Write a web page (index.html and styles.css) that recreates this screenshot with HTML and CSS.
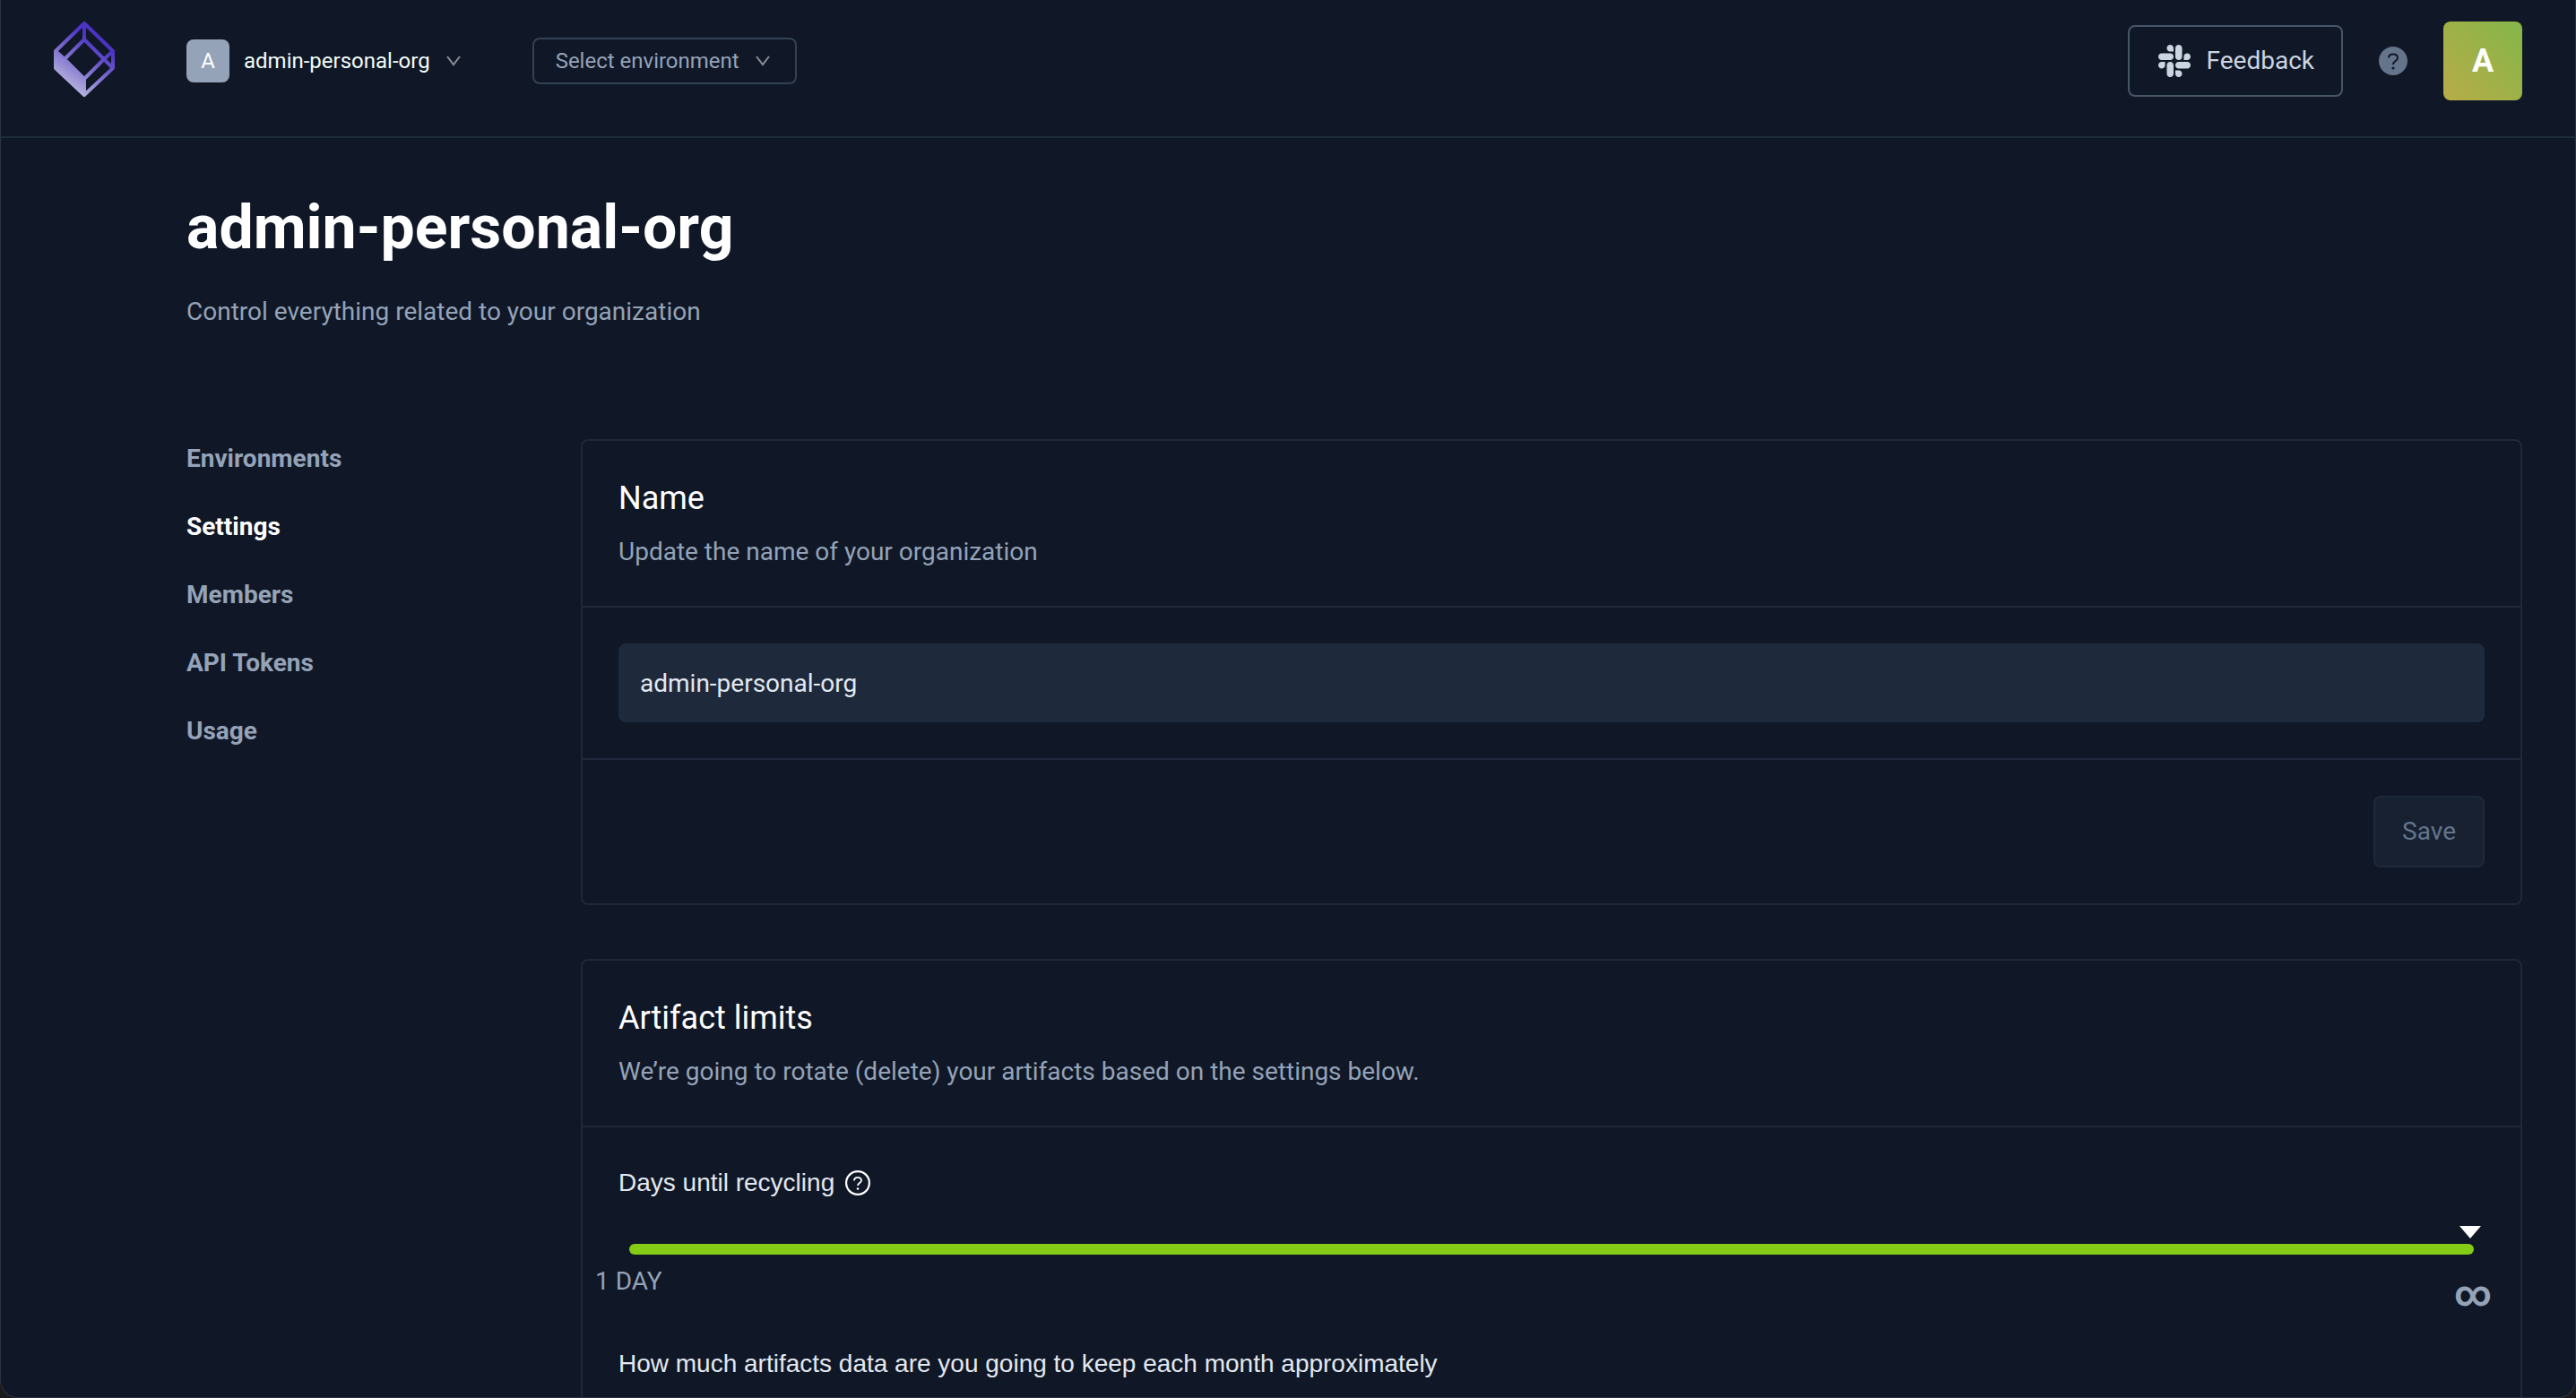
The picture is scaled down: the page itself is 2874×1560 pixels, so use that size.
FILE: index.html
```html
<!DOCTYPE html>
<html lang="en">
<head>
<meta charset="utf-8">
<meta name="viewport" content="width=device-width, initial-scale=1">
<title>admin-personal-org – Settings</title>
<link rel="stylesheet" href="styles.css">
</head>
<body>
<div class="window">
  <header class="topbar">
    <a class="logo" href="#" aria-label="Home">
      <svg width="68" height="88" viewBox="0 0 68 88" fill="none" aria-hidden="true">
        <defs>
          <linearGradient id="cube" x1="50" y1="24" x2="14" y2="76" gradientUnits="userSpaceOnUse">
            <stop offset="0" stop-color="#4c33c6"/>
            <stop offset=".45" stop-color="#7a6bcd"/>
            <stop offset="1" stop-color="#bdbbe0"/>
          </linearGradient>
        </defs>
        <path d="M2 33 12 42 34 64V82L2 52Z" fill="url(#cube)"/>
        <path d="M34 2 66 33V52L34 82 2 52V33ZM34 2V20M34 20 56 42 34 64 12 42ZM2 33 12 42M56 42 66 33M56 42 66 52M34 64V82" stroke="url(#cube)" stroke-width="4" stroke-linejoin="round"/>
      </svg>
    </a>
    <div class="org-picker">
      <span class="org-badge">A</span>
      <select class="picker" aria-label="Organization"><option>admin-personal-org</option></select>
      <svg class="chevron" width="16" height="12" viewBox="0 0 16 12" aria-hidden="true"><path d="M1 1 8 10 15 1"/></svg>
    </div>
    <div class="env-picker">
      <select class="picker" aria-label="Environment"><option>Select environment</option></select>
      <svg class="chevron" width="16" height="12" viewBox="0 0 16 12" aria-hidden="true"><path d="M1 1 8 10 15 1"/></svg>
    </div>
    <div class="topbar-actions">
      <button class="feedback" type="button">
        <svg width="36" height="36" viewBox="0 32 448 448" fill="currentColor" aria-hidden="true"><path d="M94.12 315.1c0 25.9-21.16 47.06-47.06 47.06S0 341 0 315.1c0-25.9 21.16-47.06 47.06-47.06h47.06v47.06zm23.72 0c0-25.9 21.16-47.06 47.06-47.06s47.06 21.16 47.06 47.06v117.84c0 25.9-21.16 47.06-47.06 47.06s-47.06-21.16-47.06-47.06V315.1zm47.06-188.98c-25.9 0-47.06-21.16-47.06-47.06S139 32 164.9 32s47.06 21.16 47.06 47.06v47.06H164.9zm0 23.72c25.9 0 47.06 21.16 47.06 47.06s-21.16 47.06-47.06 47.06H47.06C21.16 243.96 0 222.8 0 196.9s21.16-47.06 47.06-47.06H164.9zm188.98 47.06c0-25.9 21.16-47.06 47.06-47.06 25.9 0 47.06 21.16 47.06 47.06s-21.16 47.06-47.06 47.06h-47.06V196.9zm-23.72 0c0 25.9-21.16 47.06-47.06 47.06-25.9 0-47.06-21.16-47.06-47.06V79.06c0-25.9 21.16-47.06 47.06-47.06 25.9 0 47.06 21.16 47.06 47.06V196.9zM283.1 385.88c25.9 0 47.06 21.16 47.06 47.06 0 25.9-21.16 47.06-47.06 47.06-25.9 0-47.06-21.16-47.06-47.06v-47.06h47.06zm0-23.72c-25.9 0-47.06-21.16-47.06-47.06 0-25.9 21.16-47.06 47.06-47.06h117.84c25.9 0 47.06 21.16 47.06 47.06 0 25.9-21.16 47.06-47.06 47.06H283.1z"/></svg>
        Feedback
      </button>
      <button class="help" type="button" aria-label="Help">
        <svg width="32" height="32" viewBox="0 0 32 32" fill="none" aria-hidden="true"><circle cx="16" cy="16" r="16" fill="#64748b"/><path d="M11 12.500C11 10 13 8.500 16 8.500S21 10.200 21 12.500C21 16 16 16 16 20" stroke="#111827" stroke-width="2"/><circle cx="16" cy="24" r="1.600" fill="#111827"/></svg>
      </button>
      <button class="avatar" type="button">A</button>
    </div>
  </header>

  <main class="page">
    <h1 class="page-title">admin-personal-org</h1>
    <p class="page-subtitle">Control everything related to your organization</p>

    <div class="columns">
      <nav class="side-nav" aria-label="Organization">
        <a href="#">Environments</a>
        <a class="active" href="#" aria-current="page">Settings</a>
        <a href="#">Members</a>
        <a href="#">API Tokens</a>
        <a href="#">Usage</a>
      </nav>

      <div class="cards">
        <form class="card">
          <div class="card-head">
            <h2>Name</h2>
            <p>Update the name of your organization</p>
          </div>
          <div class="card-body">
            <input class="text-input" type="text" value="admin-personal-org" aria-label="Organization name">
          </div>
          <div class="card-foot">
            <button class="save" type="button" disabled>Save</button>
          </div>
        </form>

        <form class="card">
          <div class="card-head">
            <h2>Artifact limits</h2>
            <p>We’re going to rotate (delete) your artifacts based on the settings below.</p>
          </div>
          <div class="card-body">
            <div class="field-label">
              <label for="days">Days until recycling</label>
              <svg width="28" height="28" viewBox="0 0 28 28" fill="none" aria-hidden="true"><circle cx="14" cy="14" r="12.900" stroke="#fff" stroke-width="2.200"/><path d="M10 11.500C10 9 11.700 7.800 14 7.800S18 9.300 18 11.200C18 14 14 14 14 17" stroke="#fff" stroke-width="1.800"/><circle cx="14" cy="20.500" r="1.300" fill="#fff"/></svg>
            </div>
            <div class="slider">
              <input id="days" class="range" type="range" min="1" max="100" value="100">
              <div class="marks"><span>1 DAY</span><span class="infinity">∞</span></div>
            </div>
            <div class="field-label">
              <label for="amount">How much artifacts data are you going to keep each month approximately</label>
            </div>
            <div class="slider">
              <input id="amount" class="range" type="range" min="1" max="100" value="100">
            </div>
          </div>
        </form>
      </div>
    </div>
  </main>
</div>
</body>
</html>
```
FILE: styles.css
```css
* {
  box-sizing: border-box;
}

html {
  height: 100%;
  background: #1b1b1d;
}

body {
  height: 100%;
  margin: 0;
  font: 28px/40px Roboto, "Liberation Sans", sans-serif;
  color: #e2e8f0;
}

h1, h2, p {
  margin: 0;
}

a {
  text-decoration: none;
}

button, input, select {
  font: inherit;
  margin: 0;
}

svg {
  display: block;
  flex: none;
}

.window {
  height: 100vh;
  overflow: hidden;
  background: #101726;
  border: 1px solid #2a3342;
  border-top: 0;
  border-radius: 0 0 20px 20px;
}

.topbar {
  display: flex;
  align-items: center;
  padding: 24px 59px 40px;
  border-bottom: 2px solid #1e293b;
}

.org-picker,
.env-picker {
  display: flex;
  align-items: center;
  font-size: 24px;
  line-height: 32px;
}

.org-picker {
  margin-left: 80px;
  gap: 16px;
  color: #f0fdfa;
}

.org-badge {
  width: 48px;
  height: 48px;
  border-radius: 8px;
  background: #94a3b8;
  color: #fff;
  line-height: 48px;
  text-align: center;
}

.picker {
  appearance: none;
  field-sizing: content;
  height: 32px;
  padding: 0 2px 0 0;
  border: 0;
  background: transparent;
  color: inherit;
}

.chevron {
  fill: none;
  stroke: #8b8f96;
  stroke-width: 2;
}

.env-picker {
  margin-left: 80px;
  height: 52px;
  padding: 0 28px 0 24px;
  gap: 16px;
  border: 2px solid #334155;
  border-radius: 8px;
  color: #94a3b8;
}

.topbar-actions {
  display: flex;
  align-items: center;
  gap: 40px;
  margin-left: auto;
}

.feedback {
  display: flex;
  align-items: center;
  gap: 18px;
  height: 80px;
  padding: 0 30px 0 32px;
  border: 2px solid #475569;
  border-radius: 8px;
  background: transparent;
  color: #cbd5e1;
}

.help {
  padding: 0;
  border: 0;
  background: transparent;
}

.avatar {
  width: 88px;
  height: 88px;
  padding: 0;
  border: 0;
  border-radius: 8px;
  background: linear-gradient(45deg, #b8ac48, #84b649);
  color: #fff;
  font-size: 36px;
  font-weight: 700;
}

.page {
  padding: 60px 59px 0 207px;
}

.page-title {
  font-size: 68px;
  line-height: 80px;
  font-weight: 700;
  color: #fff;
}

.page-subtitle {
  margin-top: 34px;
  color: #94a3b8;
}

.columns {
  display: grid;
  grid-template-columns: 440px minmax(0, 1fr);
  align-items: start;
  margin-top: 122px;
}

.side-nav {
  display: flex;
  flex-direction: column;
  align-items: flex-start;
  gap: 36px;
  padding-top: 2px;
}

.side-nav a {
  color: #94a3b8;
  font-weight: 700;
}

.side-nav .active {
  color: #fff;
}

.cards {
  display: grid;
  gap: 60px;
}

.card {
  border: 2px solid #1e293b;
  border-radius: 8px;
}

.card-head {
  padding: 40px;
  border-bottom: 2px solid #1e293b;
}

.card-head h2 {
  font-size: 36px;
  line-height: 48px;
  font-weight: 400;
  color: #fff;
}

.card-head p {
  margin-top: 16px;
  color: #94a3b8;
}

.card-body {
  padding: 40px;
}

.text-input {
  display: block;
  width: 100%;
  height: 88px;
  padding: 0 24px;
  border: 0;
  border-radius: 8px;
  background: #1e293b;
  color: #e2e8f0;
}

.card-foot {
  display: flex;
  justify-content: flex-end;
  padding: 40px;
  border-top: 2px solid #1e293b;
}

.save {
  height: 80px;
  padding: 0 30px;
  border: 2px solid #1e293b;
  border-radius: 8px;
  background: #172131;
  color: #64748b;
}

.field-label {
  display: flex;
  align-items: center;
  gap: 12px;
  line-height: 44px;
  font-family: "Liberation Sans", Arial, sans-serif;
}

.slider {
  padding: 46px 12px 36px;
}

.range {
  display: block;
  appearance: none;
  width: 100%;
  height: 12px;
  margin: 0;
  border-radius: 6px;
  background: #84cc16;
}

.range::-webkit-slider-runnable-track {
  height: 12px;
  margin: 0 -8px;
}

.range::-webkit-slider-thumb {
  appearance: none;
  width: 24px;
  height: 14px;
  margin-top: -20px;
  background: #fff;
  clip-path: polygon(0 0, 100% 0, 50% 100%);
}

.marks {
  display: flex;
  justify-content: space-between;
  margin: 10px -20px 0 -38px;
  color: #94a3b8;
}

.infinity {
  padding-top: 14px;
  font-size: 40px;
  font-weight: 700;
}
```
